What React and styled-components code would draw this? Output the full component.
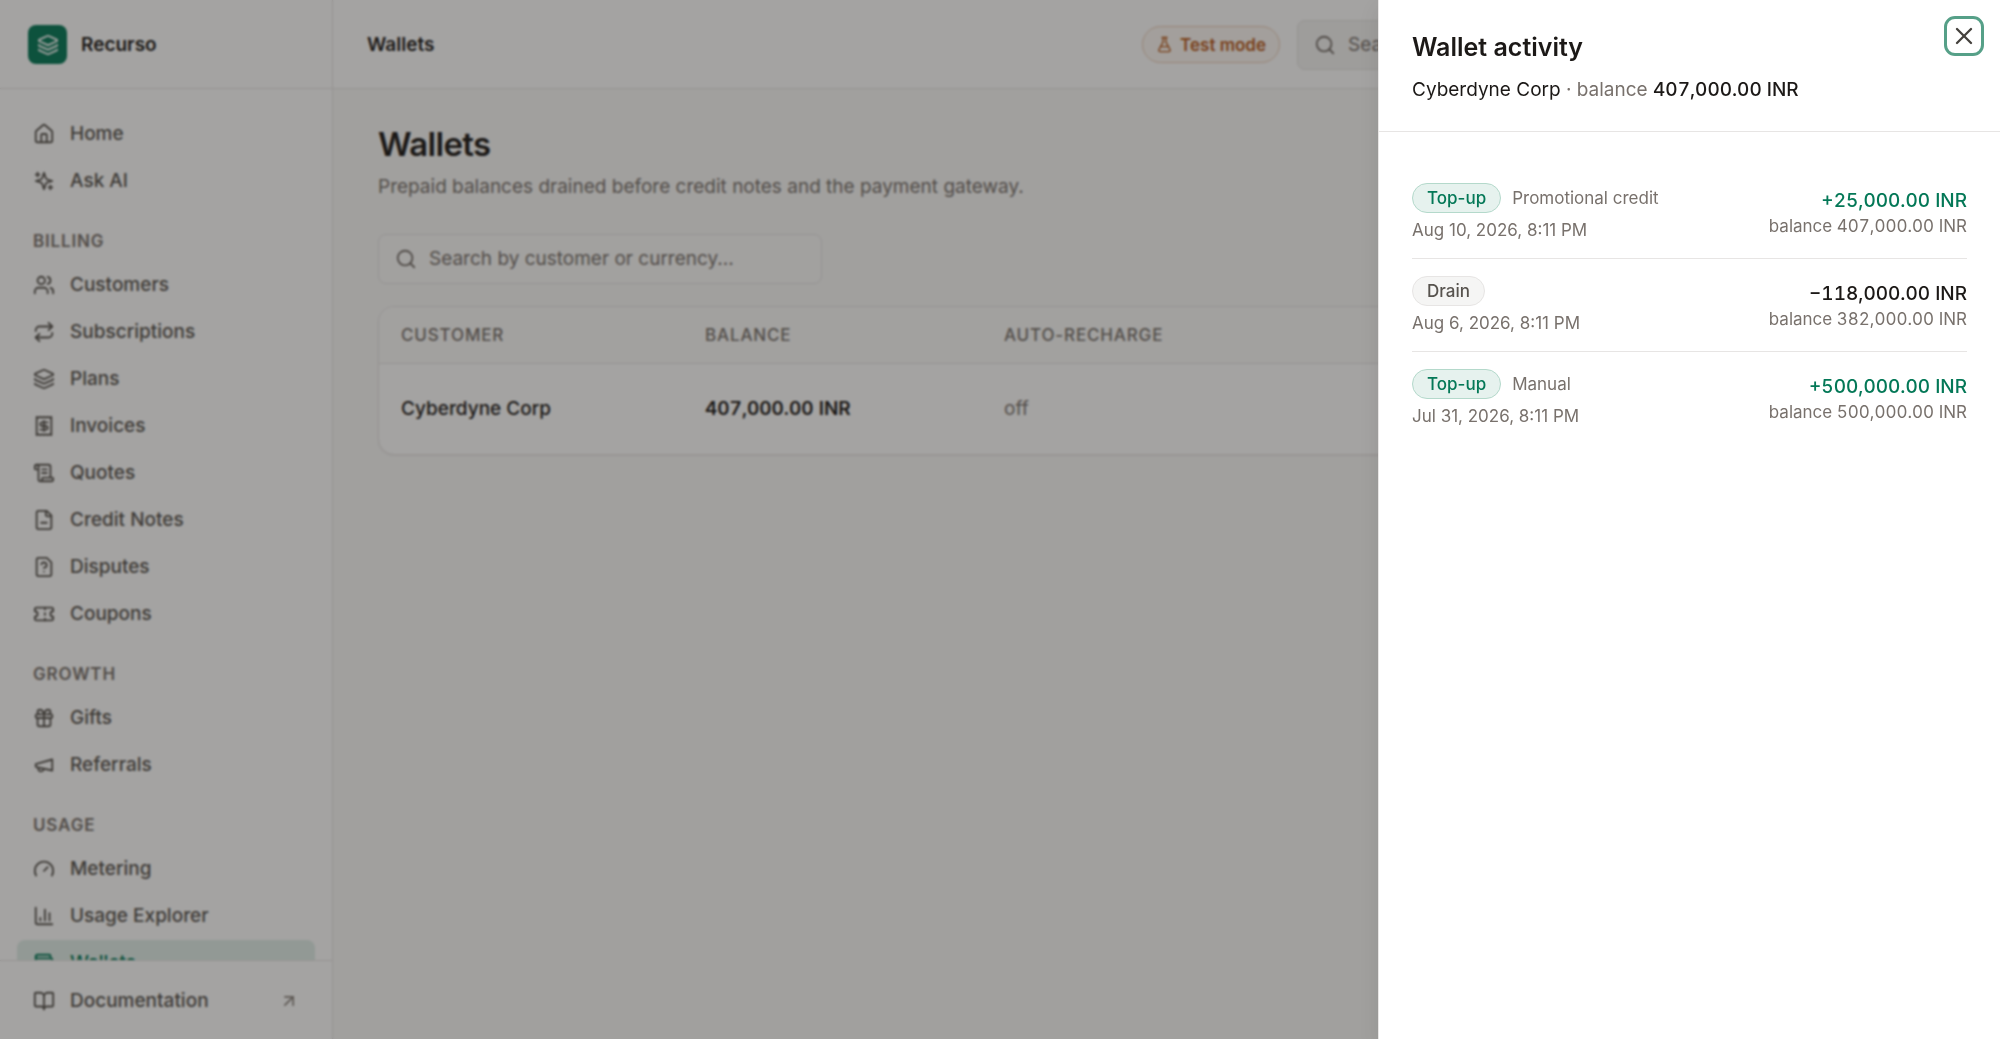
import React, { useState } from "react";
import styled, { createGlobalStyle, css } from "styled-components";
import {
  ArrowUpRight,
  BookOpen,
  ChartColumn,
  FlaskConical,
  Gauge,
  Gift,
  House,
  Layers,
  Receipt,
  Repeat,
  ScrollText,
  Search,
  Ticket,
  Users,
  Wallet,
  X,
} from "lucide-react";

const GlobalStyle = createGlobalStyle`
  * {
    box-sizing: border-box;
  }
  body {
    margin: 0;
    background: #fafaf9;
    color: #1c1917;
    font-family: "Inter", "Liberation Sans", sans-serif;
    font-size: 19px;
    line-height: 28px;
    -webkit-font-smoothing: antialiased;
  }
  h1, h2, p, ul {
    margin: 0;
    padding: 0;
  }
  button, input {
    font: inherit;
    color: inherit;
  }
`;

const Shell = styled.div`
  display: flex;
  height: 100vh;
  overflow: hidden;
`;

const Sidebar = styled.aside`
  display: flex;
  flex-direction: column;
  flex: 0 0 333px;
  background: #fff;
  border-right: 1px solid #e7e5e4;
`;

const Brand = styled.div`
  display: flex;
  align-items: center;
  flex-shrink: 0;
  gap: 14px;
  height: 89px;
  padding: 1px 28px 0;
  border-bottom: 1px solid #e7e5e4;
  font-weight: 600;
`;

const Logo = styled.span`
  display: grid;
  place-items: center;
  width: 39px;
  height: 39px;
  border-radius: 8px;
  background: #047857;
  color: #fff;
`;

const Nav = styled.nav`
  flex: 1;
  min-height: 0;
  overflow-y: auto;
  scrollbar-width: none;
  padding: 22px 17px;
`;

const NavList = styled.ul`
  display: flex;
  flex-direction: column;
  gap: 2px;
  list-style: none;
`;

const NavHeading = styled.h2`
  padding: 24px 16px 7px;
  font-size: 17px;
  line-height: 28px;
  font-weight: 600;
  letter-spacing: 0.05em;
  text-transform: uppercase;
  color: #78716c;
`;

const NavLink = styled.a`
  display: flex;
  align-items: center;
  gap: 15px;
  height: 45px;
  padding: 0 16px;
  border-radius: 8px;
  color: #57534e;
  font-weight: 500;
  text-decoration: none;
  ${({ $active }) =>
    $active &&
    css`
      background: #e1efea;
      color: #047857;
    `}
  svg:last-child:not(:first-child) {
    margin-left: auto;
    color: #8a837d;
  }
`;

const SidebarFooter = styled.div`
  flex-shrink: 0;
  padding: 17px 17px 16px;
  border-top: 1px solid #e7e5e4;
`;

const Page = styled.div`
  flex: 1;
  min-width: 0;
`;

const TopBar = styled.header`
  display: flex;
  align-items: center;
  gap: 17px;
  height: 89px;
  padding: 1px 28px 0 34px;
  background: #fff;
  border-bottom: 1px solid #e7e5e4;
`;

const Crumb = styled.span`
  flex: 1;
  font-weight: 600;
`;

const TestPill = styled.span`
  display: flex;
  align-items: center;
  gap: 7px;
  height: 37px;
  padding: 0 13px;
  border: 1px solid #eccdb8;
  border-radius: 999px;
  background: #fdf9f5;
  color: #b85a1c;
  font-size: 17px;
  font-weight: 600;
`;

const SearchBox = styled.label`
  display: flex;
  align-items: center;
  gap: 12px;
  height: 50px;
  padding: 0 16px;
  border: 1px solid #e7e5e4;
  border-radius: 8px;
  background: ${({ $muted }) => ($muted ? "#f5f5f4" : "#fcfcfb")};
  color: #78716c;
  width: ${({ $wide }) => ($wide ? "675px" : "444px")};
  input {
    flex: 1;
    min-width: 0;
    padding: 0;
    border: 0;
    outline: 0;
    background: none;
  }
  input::placeholder {
    color: #78716c;
    opacity: 1;
  }
`;

const Content = styled.main`
  padding: 34px 45px;
`;

const Title = styled.h1`
  font-size: 33px;
  line-height: 42px;
  font-weight: 600;
  letter-spacing: -0.02em;
`;

const Lead = styled.p`
  margin: 8px 0 33px;
  color: #78716c;
`;

const TableCard = styled.div`
  margin-top: 22px;
  border: 1px solid #e7e5e4;
  border-radius: 16px;
  background: #fff;
  box-shadow: 0 1px 2px rgba(28, 25, 23, 0.06);
  overflow: hidden;
`;

const Table = styled.table`
  width: 100%;
  table-layout: fixed;
  border-collapse: collapse;
  text-align: left;
  th {
    height: 56px;
    padding: 0 22px;
    border-bottom: 1px solid #e7e5e4;
    background: #fcfcfb;
    font-size: 17px;
    font-weight: 500;
    letter-spacing: 0.05em;
    text-transform: uppercase;
    color: #78716c;
  }
  td {
    height: 91px;
    padding: 0 22px;
    font-weight: 500;
  }
  th:nth-child(1) {
    width: 304px;
  }
  th:nth-child(2) {
    width: 299px;
  }
`;

const Balance = styled.span`
  font-weight: 600;
  font-variant-numeric: tabular-nums;
`;

const Faint = styled.span`
  font-weight: 400;
  color: #78716c;
`;

const Backdrop = styled.div`
  position: fixed;
  inset: 0;
  background: rgba(28, 25, 23, 0.4);
  backdrop-filter: blur(1px);
`;

const Drawer = styled.section`
  position: fixed;
  top: 0;
  right: 0;
  bottom: 0;
  width: 622px;
  max-width: 100%;
  border-left: 1px solid #e7e5e4;
  background: #fff;
  box-shadow: 0 8px 20px rgba(28, 25, 23, 0.08);
`;

const DrawerHeader = styled.header`
  padding: 30px 33px 27px;
  border-bottom: 1px solid #e7e5e4;
`;

const DrawerTitle = styled.h2`
  font-size: 25px;
  line-height: 34px;
  font-weight: 600;
`;

const DrawerSummary = styled.p`
  margin-top: 12px;
  color: #78716c;
  strong {
    color: #1c1917;
    font-weight: 500;
    font-variant-numeric: tabular-nums;
  }
  span {
    color: #1c1917;
  }
`;

const CloseButton = styled.button`
  position: absolute;
  top: 16px;
  right: 16px;
  display: grid;
  place-items: center;
  width: 40px;
  height: 40px;
  padding: 0;
  border: 3px solid #56a088;
  border-radius: 11px;
  background: #fff;
  color: #44403c;
`;

const Activity = styled.ul`
  padding: 34px 33px;
  list-style: none;
`;

const ActivityRow = styled.li`
  display: flex;
  align-items: center;
  justify-content: space-between;
  padding: 17px 0 16px;
  & + & {
    border-top: 1px solid #e7e5e4;
  }
`;

const Kind = styled.div`
  display: flex;
  align-items: center;
  gap: 11px;
  margin-bottom: 5px;
  font-size: 17px;
  color: #78716c;
`;

const Badge = styled.span`
  height: 30px;
  padding: 0 14px;
  border: 1px solid ${({ $positive }) => ($positive ? "#b4d9cb" : "#e7e5e4")};
  border-radius: 999px;
  background: ${({ $positive }) => ($positive ? "#e6f2ee" : "#f5f5f4")};
  color: ${({ $positive }) => ($positive ? "#047857" : "#57534e")};
  font-weight: 500;
`;

const Small = styled.div`
  font-size: 17px;
  line-height: 24px;
  color: #78716c;
  font-variant-numeric: ${({ $tabular }) =>
    $tabular ? "tabular-nums" : "normal"};
`;

const Amounts = styled.div`
  text-align: right;
`;

const Amount = styled.div`
  line-height: 26px;
  font-weight: 500;
  font-variant-numeric: tabular-nums;
  color: ${({ $positive }) => ($positive ? "#047857" : "#1c1917")};
`;

// simpler strokes than the current lucide versions
const makeIcon =
  (...paths) =>
  ({ size = 24 }) => (
    <svg
      width={size}
      height={size}
      viewBox="0 0 24 24"
      fill="none"
      stroke="currentColor"
      strokeWidth="2"
      strokeLinecap="round"
      strokeLinejoin="round"
      aria-hidden="true"
    >
      {paths.map((d) => (
        <path key={d} d={d} />
      ))}
    </svg>
  );

const Sparkles = makeIcon(
  "m12 3-1.9 5.8a2 2 0 0 1-1.3 1.3L3 12l5.8 1.9a2 2 0 0 1 1.3 1.3L12 21l1.9-5.8a2 2 0 0 1 1.3-1.3L21 12l-5.8-1.9a2 2 0 0 1-1.3-1.3Z",
  "M5 3v4",
  "M19 17v4",
  "M3 5h4",
  "M17 19h4"
);

const Megaphone = makeIcon(
  "m3 11 18-5v12L3 14v-3z",
  "M11.6 16.8a3 3 0 1 1-5.8-1.6"
);

const FileMinus = makeIcon(
  "M15 2H6a2 2 0 0 0-2 2v16a2 2 0 0 0 2 2h12a2 2 0 0 0 2-2V7Z",
  "M14 2v4a2 2 0 0 0 2 2h4",
  "M9 15h6"
);

const FileQuestion = makeIcon(
  "M15 2H6a2 2 0 0 0-2 2v16a2 2 0 0 0 2 2h12a2 2 0 0 0 2-2V7Z",
  "M12 17h.01",
  "M9.1 9a3 3 0 0 1 5.8 1c0 2-3 3-3 3"
);

const sections = [
  {
    items: [
      { label: "Home", icon: House },
      { label: "Ask AI", icon: Sparkles },
    ],
  },
  {
    heading: "Billing",
    items: [
      { label: "Customers", icon: Users },
      { label: "Subscriptions", icon: Repeat },
      { label: "Plans", icon: Layers },
      { label: "Invoices", icon: Receipt },
      { label: "Quotes", icon: ScrollText },
      { label: "Credit Notes", icon: FileMinus },
      { label: "Disputes", icon: FileQuestion },
      { label: "Coupons", icon: Ticket },
    ],
  },
  {
    heading: "Growth",
    items: [
      { label: "Gifts", icon: Gift },
      { label: "Referrals", icon: Megaphone },
    ],
  },
  {
    heading: "Usage",
    items: [
      { label: "Metering", icon: Gauge },
      { label: "Usage Explorer", icon: ChartColumn },
      { label: "Wallets", icon: Wallet, active: true },
    ],
  },
];

const activity = [
  {
    kind: "Top-up",
    note: "Promotional credit",
    date: "Aug 10, 2026, 8:11 PM",
    amount: "+25,000.00 INR",
    balance: "407,000.00 INR",
  },
  {
    kind: "Drain",
    date: "Aug 6, 2026, 8:11 PM",
    amount: "−118,000.00 INR",
    balance: "382,000.00 INR",
  },
  {
    kind: "Top-up",
    note: "Manual",
    date: "Jul 31, 2026, 8:11 PM",
    amount: "+500,000.00 INR",
    balance: "500,000.00 INR",
  },
];

const App = () => {
  const [open, setOpen] = useState(true);
  const [query, setQuery] = useState("");

  return (
    <>
      <GlobalStyle />
      <Shell>
        <Sidebar>
          <Brand>
            <Logo>
              <Layers size={22} />
            </Logo>
            Recurso
          </Brand>
          <Nav>
            {sections.map(({ heading, items }) => (
              <React.Fragment key={heading || "top"}>
                {heading && <NavHeading>{heading}</NavHeading>}
                <NavList>
                  {items.map(({ label, icon: Icon, active }) => (
                    <li key={label}>
                      <NavLink href="#" $active={active}>
                        <Icon size={22} />
                        {label}
                      </NavLink>
                    </li>
                  ))}
                </NavList>
              </React.Fragment>
            ))}
          </Nav>
          <SidebarFooter>
            <NavLink href="#">
              <BookOpen size={22} />
              Documentation
              <ArrowUpRight size={20} />
            </NavLink>
          </SidebarFooter>
        </Sidebar>

        <Page>
          <TopBar>
            <Crumb>Wallets</Crumb>
            <TestPill>
              <FlaskConical size={17} />
              Test mode
            </TestPill>
            <SearchBox $muted $wide>
              <Search size={22} />
              <input type="text" placeholder="Search" aria-label="Search" />
            </SearchBox>
          </TopBar>
          <Content>
            <Title>Wallets</Title>
            <Lead>
              Prepaid balances drained before credit notes and the payment
              gateway.
            </Lead>
            <SearchBox>
              <Search size={22} />
              <input
                type="text"
                value={query}
                placeholder="Search by customer or currency..."
                aria-label="Search wallets"
                onChange={({ target }) => setQuery(target.value)}
              />
            </SearchBox>
            <TableCard>
              <Table>
                <thead>
                  <tr>
                    <th>Customer</th>
                    <th>Balance</th>
                    <th>Auto-recharge</th>
                  </tr>
                </thead>
                <tbody>
                  <tr>
                    <td>Cyberdyne Corp</td>
                    <td>
                      <Balance>407,000.00 INR</Balance>
                    </td>
                    <td>
                      <Faint>off</Faint>
                    </td>
                  </tr>
                </tbody>
              </Table>
            </TableCard>
          </Content>
        </Page>
      </Shell>

      {open && (
        <>
          <Backdrop onClick={() => setOpen(false)} />
          <Drawer role="dialog" aria-label="Wallet activity">
            <DrawerHeader>
              <DrawerTitle>Wallet activity</DrawerTitle>
              <DrawerSummary>
                <span>Cyberdyne Corp</span> · balance{" "}
                <strong>407,000.00 INR</strong>
              </DrawerSummary>
              <CloseButton aria-label="Close" onClick={() => setOpen(false)}>
                <X size={28} />
              </CloseButton>
            </DrawerHeader>
            <Activity>
              {activity.map(({ kind, note, date, amount, balance }) => (
                <ActivityRow key={date}>
                  <div>
                    <Kind>
                      <Badge $positive={kind === "Top-up"}>{kind}</Badge>
                      {note}
                    </Kind>
                    <Small>{date}</Small>
                  </div>
                  <Amounts>
                    <Amount $positive={kind === "Top-up"}>{amount}</Amount>
                    <Small $tabular>balance {balance}</Small>
                  </Amounts>
                </ActivityRow>
              ))}
            </Activity>
          </Drawer>
        </>
      )}
    </>
  );
};

export default App;
